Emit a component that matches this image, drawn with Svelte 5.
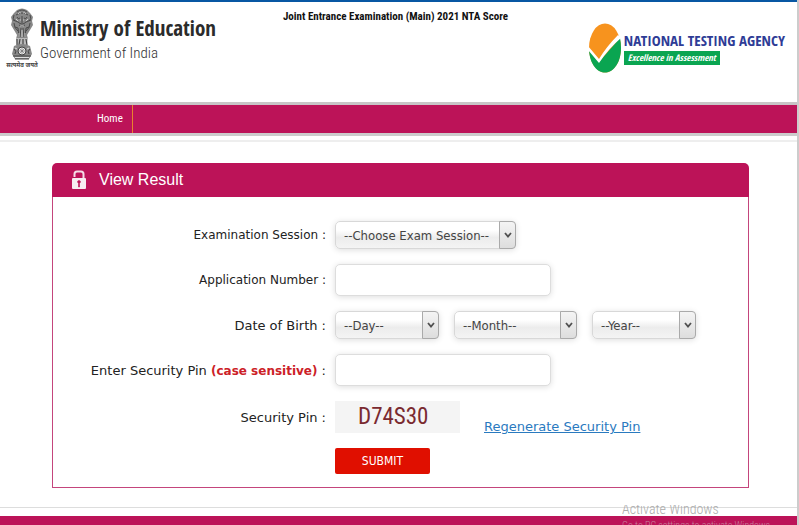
<script>
	let session = $state('');
	let day = $state('');
	let month = $state('');
	let year = $state('');
	let applicationNumber = $state('');
	let pin = $state('');

	const days = Array.from({ length: 31 }, (_, i) => i + 1);
	const months = Array.from({ length: 12 }, (_, i) => i + 1);
	const years = Array.from({ length: 30 }, (_, i) => 2008 - i);
	const sessions = ['February 2021', 'March 2021'];
</script>

{#snippet arrow()}
	<span class="arrow">
		<svg viewBox="0 0 8 6" width="8" height="6" aria-hidden="true">
			<path d="M1 1l3 3.6L7 1" fill="none" stroke="#505050" stroke-width="1.8" />
		</svg>
	</span>
{/snippet}

<div class="page">
	<header>
		<div class="ministry">
			<div class="emblem">
				<svg viewBox="0 0 24 54" width="24" height="54" aria-hidden="true">
					<path
						d="M7 2Q12-1 17 2l3 3 3 4-1 4 1 4-3 5-3 5 1 4H6l1-4-3-5-3-5 1-4-1-4 3-4z"
						fill="#888"
					/>
					<g fill="none" stroke="#444" stroke-width="0.9">
						<path d="M7 4q5-4 10 0M6 7q6-4 12 0M4 7q-2 4 1 6M20 7q2 4-1 6M7 9q1 3 3 1M17 9q-1 3-3 1" />
						<path d="M8 14q4 4 8 0M9 17q3 3 6 0M4 15q0 5 4 8M20 15q0 5-4 8M8 20l1 9M16 20l-1 9M11 20l-1 9M13 20l1 9" />
						<path d="M12 8v7M3 12l5 2M21 12l-5 2M5 19l3 1M19 19l-3 1" />
					</g>
					<g fill="none" stroke="#ddd" stroke-width="0.8">
						<path d="M8 6q1-2 3-1M13 5q2-1 3 1M6 11l2 2M18 11l-2 2M10 12h1M13 12h1M10 18h4M9 25v4M12 22v7M15 25v4" />
					</g>
					<path d="M6 30h12l-1 8H7z" fill="#bbb" />
					<path d="M7 31v6M10 31l-1 6M13 31v6M16 31l1 6" stroke="#444" stroke-width="1.2" />
					<path d="M4 38q8-4 16 0l2 8-3 5H5l-3-5z" fill="#888" />
					<circle cx="12" cy="43" r="4" fill="#eee" stroke="#444" />
					<path d="M12 39v8M8 43h8M9 40l6 6M15 40l-6 6" stroke="#666" stroke-width="0.6" />
					<path d="M4 41q3 2 1 5M20 41q-3 2-1 5M3 48h18M5 51h14" fill="none" stroke="#444" />
					<path d="M5 40l2 1M17 41l2-1M5 49.5h14" stroke="#ddd" />
				</svg>
				<span class="motto">सत्यमेव जयते</span>
			</div>
			<div class="ministry-text">
				<strong>Ministry of Education</strong>
				<span>Government of India</span>
			</div>
		</div>

		<h1>Joint Entrance Examination (Main) 2021 NTA Score</h1>

		<div class="agency">
			<svg viewBox="0 0 34 50" width="34" height="50" aria-hidden="true">
				<ellipse cx="17" cy="25" rx="16" ry="24.5" fill="#f7931e" />
				<path d="M1 25L11 39 32 15Q33 20 33 25C33 39 26 49.500 17 49.500S1 39 1 25z" fill="#0aa551" />
				<path d="M0 23L11 36Q19 23 30 12L33 15Q21 25 11 40L0 27z" fill="#fff" />
			</svg>
			<div class="agency-text">
				<strong>NATIONAL TESTING AGENCY</strong>
				<em>Excellence in Assessment</em>
			</div>
		</div>
	</header>

	<nav>
		<a href="#home">Home</a>
	</nav>

	<main>
		<section class="panel">
			<h2>
				<svg viewBox="0 0 14 20" width="14" height="20" aria-hidden="true">
					<path d="M2.500 7V4Q2.500 1.500 5 1.500h4Q11.500 1.500 11.500 4v4" fill="none" stroke="#f4dce6" stroke-width="2" />
					<rect x="0" y="8" width="14" height="11" rx="1" fill="#f7edf1" />
					<path d="M5.500 12a1.500 1.500 0 0 1 3 0l-1 1.500V17h-1v-3.500z" fill="#bc1358" stroke="#bc1358" stroke-width="0.600" />
				</svg>
				View Result
			</h2>

			<form onsubmit={(e) => e.preventDefault()}>
				<label class="small" for="session">Examination Session :</label>
				<div class="field">
					<span class="select wide">
						<select id="session" bind:value={session}>
							<option value="">--Choose Exam Session--</option>
							{#each sessions as s}
								<option value={s}>{s}</option>
							{/each}
						</select>
						{@render arrow()}
					</span>
				</div>

				<label class="small" for="application">Application Number :</label>
				<div class="field">
					<input id="application" type="text" bind:value={applicationNumber} />
				</div>

				<label for="day">Date of Birth :</label>
				<div class="field dates">
					<span class="select">
						<select id="day" bind:value={day}>
							<option value="">--Day--</option>
							{#each days as d}
								<option value={d}>{d}</option>
							{/each}
						</select>
						{@render arrow()}
					</span>
					<span class="select month">
						<select aria-label="Month" bind:value={month}>
							<option value="">--Month--</option>
							{#each months as m}
								<option value={m}>{m}</option>
							{/each}
						</select>
						{@render arrow()}
					</span>
					<span class="select">
						<select aria-label="Year" bind:value={year}>
							<option value="">--Year--</option>
							{#each years as y}
								<option value={y}>{y}</option>
							{/each}
						</select>
						{@render arrow()}
					</span>
				</div>

				<label for="pin">Enter Security Pin <b>(case sensitive)</b> :</label>
				<div class="field">
					<input id="pin" type="text" autocomplete="off" bind:value={pin} />
				</div>

				<span class="label">Security Pin :</span>
				<div class="field captcha-row">
					<div class="captcha">D74S30</div>
					<a href="#regenerate">Regenerate Security Pin</a>
				</div>

				<button type="submit">SUBMIT</button>
			</form>
		</section>
	</main>

	<footer></footer>

	<div class="watermark">
		<p>Activate Windows</p>
		<small>Go to PC settings to activate Windows.</small>
	</div>
</div>

<style>
	:global(body) {
		margin: 0;
		background: #fff;
	}

	.page {
		position: relative;
		min-height: 100vh;
		box-sizing: border-box;
		display: flex;
		flex-direction: column;
		overflow: hidden;
		border-right: 2px solid #ccc;
		font-family: 'DejaVu Sans', Verdana, sans-serif;
		color: #222;
	}

	header {
		display: grid;
		grid-template-columns: 1fr auto 1fr;
		align-items: start;
		height: 100px;
		border-top: 2px solid #0857a3;
		box-sizing: border-box;
		padding: 0 12px 0 6px;
	}

	.ministry {
		display: flex;
		gap: 2px;
		padding-top: 6px;
	}

	.emblem {
		display: flex;
		flex-direction: column;
		align-items: center;
		width: 32px;
	}

	.motto {
		font: 700 6px/8px 'Noto Sans Devanagari', 'Noto Sans', sans-serif;
		white-space: nowrap;
		color: #444;
	}

	.ministry-text {
		display: flex;
		flex-direction: column;
		white-space: nowrap;
		padding-top: 7px;
	}

	.ministry-text strong {
		font: 700 21px/26px 'Open Sans Condensed', 'Open Sans', sans-serif;
		color: #2b2b2b;
	}

	.ministry-text span {
		font: 300 15px/24px 'Roboto Condensed', 'Open Sans', sans-serif;
		color: #333;
	}

	h1 {
		margin: 0;
		padding-top: 6px;
		font: 700 11px/18px 'Roboto Condensed', 'Open Sans Condensed', sans-serif;
		color: #111;
	}

	.agency {
		display: flex;
		gap: 2px;
		justify-self: end;
		padding-top: 21px;
	}

	.agency-text {
		display: flex;
		flex-direction: column;
		align-items: flex-start;
		padding-top: 8px;
		white-space: nowrap;
	}

	.agency-text strong {
		font: 700 15px/18px 'Open Sans Condensed', 'Open Sans', sans-serif;
		color: #2e3c96;
	}

	.agency-text em {
		margin-top: 2px;
		padding: 0 4px;
		background: #0aa551;
		font: italic 700 9px/14px 'Open Sans Condensed', 'Open Sans', sans-serif;
		color: #fff;
	}

	nav {
		display: flex;
		height: 28px;
		margin-top: 2px;
		padding-left: 84px;
		border-top: 3px solid #c8c4c6;
		border-bottom: 3px solid #ccc;
		background: #bc1358;
	}

	nav a {
		padding: 0 9px 0 13px;
		border-right: 1px solid #e8822e;
		font: 11px/28px 'Roboto Condensed', 'Open Sans Condensed', sans-serif;
		color: #fff;
		text-decoration: none;
	}

	main {
		flex: 1;
		margin-top: 4px;
		padding: 21px 48px 18px 52px;
		border-top: 2px solid #eee;
		border-bottom: 1px solid #ddd;
	}

	.panel {
		border-radius: 5px 5px 0 0;
	}

	h2 {
		display: flex;
		align-items: center;
		gap: 13px;
		margin: 0;
		padding-left: 20px;
		border-radius: 5px 5px 0 0;
		background: #bc1358;
		font: 16px/34px 'Liberation Sans', Arial, sans-serif;
		color: #fff;
	}

	form {
		display: grid;
		grid-template-columns: 273px 1fr;
		column-gap: 9px;
		row-gap: 15px;
		align-items: center;
		padding: 24px 0 13px;
		border: 1px solid #c4457c;
		border-top: none;
	}

	label,
	.label {
		text-align: right;
		font-size: 13px;
		white-space: nowrap;
	}

	label.small {
		font-size: 12px;
	}

	label b {
		font-size: 12px;
		color: #cc2127;
	}

	.field {
		display: flex;
	}

	.dates {
		gap: 15px;
	}

	.select {
		position: relative;
		width: 104px;
	}

	.select.wide {
		width: 181px;
	}

	.select.month {
		width: 123px;
	}

	select {
		appearance: none;
		width: 100%;
		height: 28px;
		padding: 0 16px 0 8px;
		border: 1px solid #d8d8d8;
		border-radius: 5px;
		background: linear-gradient(#fff 30%, #ececec 60%, #f4f4f4);
		box-shadow: 0 1px 6px #ddd;
		font: 13px 'DejaVu Sans Condensed', Tahoma, sans-serif;
		color: #444;
	}

	.arrow {
		position: absolute;
		top: 0;
		right: 0;
		bottom: 0;
		width: 15px;
		display: grid;
		place-items: center;
		border: 1px solid #aaa;
		border-radius: 0 4px 4px 0;
		background: linear-gradient(#f4f4f4, #ddd);
		pointer-events: none;
	}

	input {
		box-sizing: border-box;
		width: 216px;
		height: 32px;
		padding: 0 9px;
		border: 1px solid #ddd;
		border-radius: 5px;
		box-shadow: 0 1px 6px #ddd;
		font: 13px 'DejaVu Sans Condensed', Tahoma, sans-serif;
	}

	.captcha-row {
		align-items: flex-end;
		gap: 24px;
	}

	.captcha {
		width: 125px;
		box-sizing: border-box;
		padding-left: 23px;
		background: #f4f4f4;
		font: 23px/32px 'Roboto Condensed', 'Open Sans Condensed', sans-serif;
		color: #7a2a30;
	}

	.captcha-row a {
		font-size: 13px;
		line-height: 12px;
		color: #2a7abf;
	}

	button {
		grid-column: 2;
		justify-self: start;
		width: 95px;
		height: 26px;
		padding: 0;
		border: none;
		border-radius: 2px;
		background: #e00f00;
		font: 12px 'DejaVu Sans Condensed', Tahoma, sans-serif;
		color: #fff;
	}

	footer {
		height: 9px;
		margin-top: 8px;
		background: #bc1358;
	}

	/* the system notice runs past the bottom of the window */
	.watermark {
		position: absolute;
		right: 0;
		bottom: 0;
		width: 175px;
		height: 20px;
		overflow: hidden;
		font-family: 'Roboto Condensed', 'Open Sans', sans-serif;
		font-weight: 300;
		white-space: nowrap;
		color: #aaa;
	}

	.watermark p {
		margin: -5px 0 0;
		font-size: 14px;
		line-height: 18px;
	}

	.watermark small {
		display: block;
		font-size: 10px;
		line-height: 16px;
		color: #c9849f;
	}
</style>
